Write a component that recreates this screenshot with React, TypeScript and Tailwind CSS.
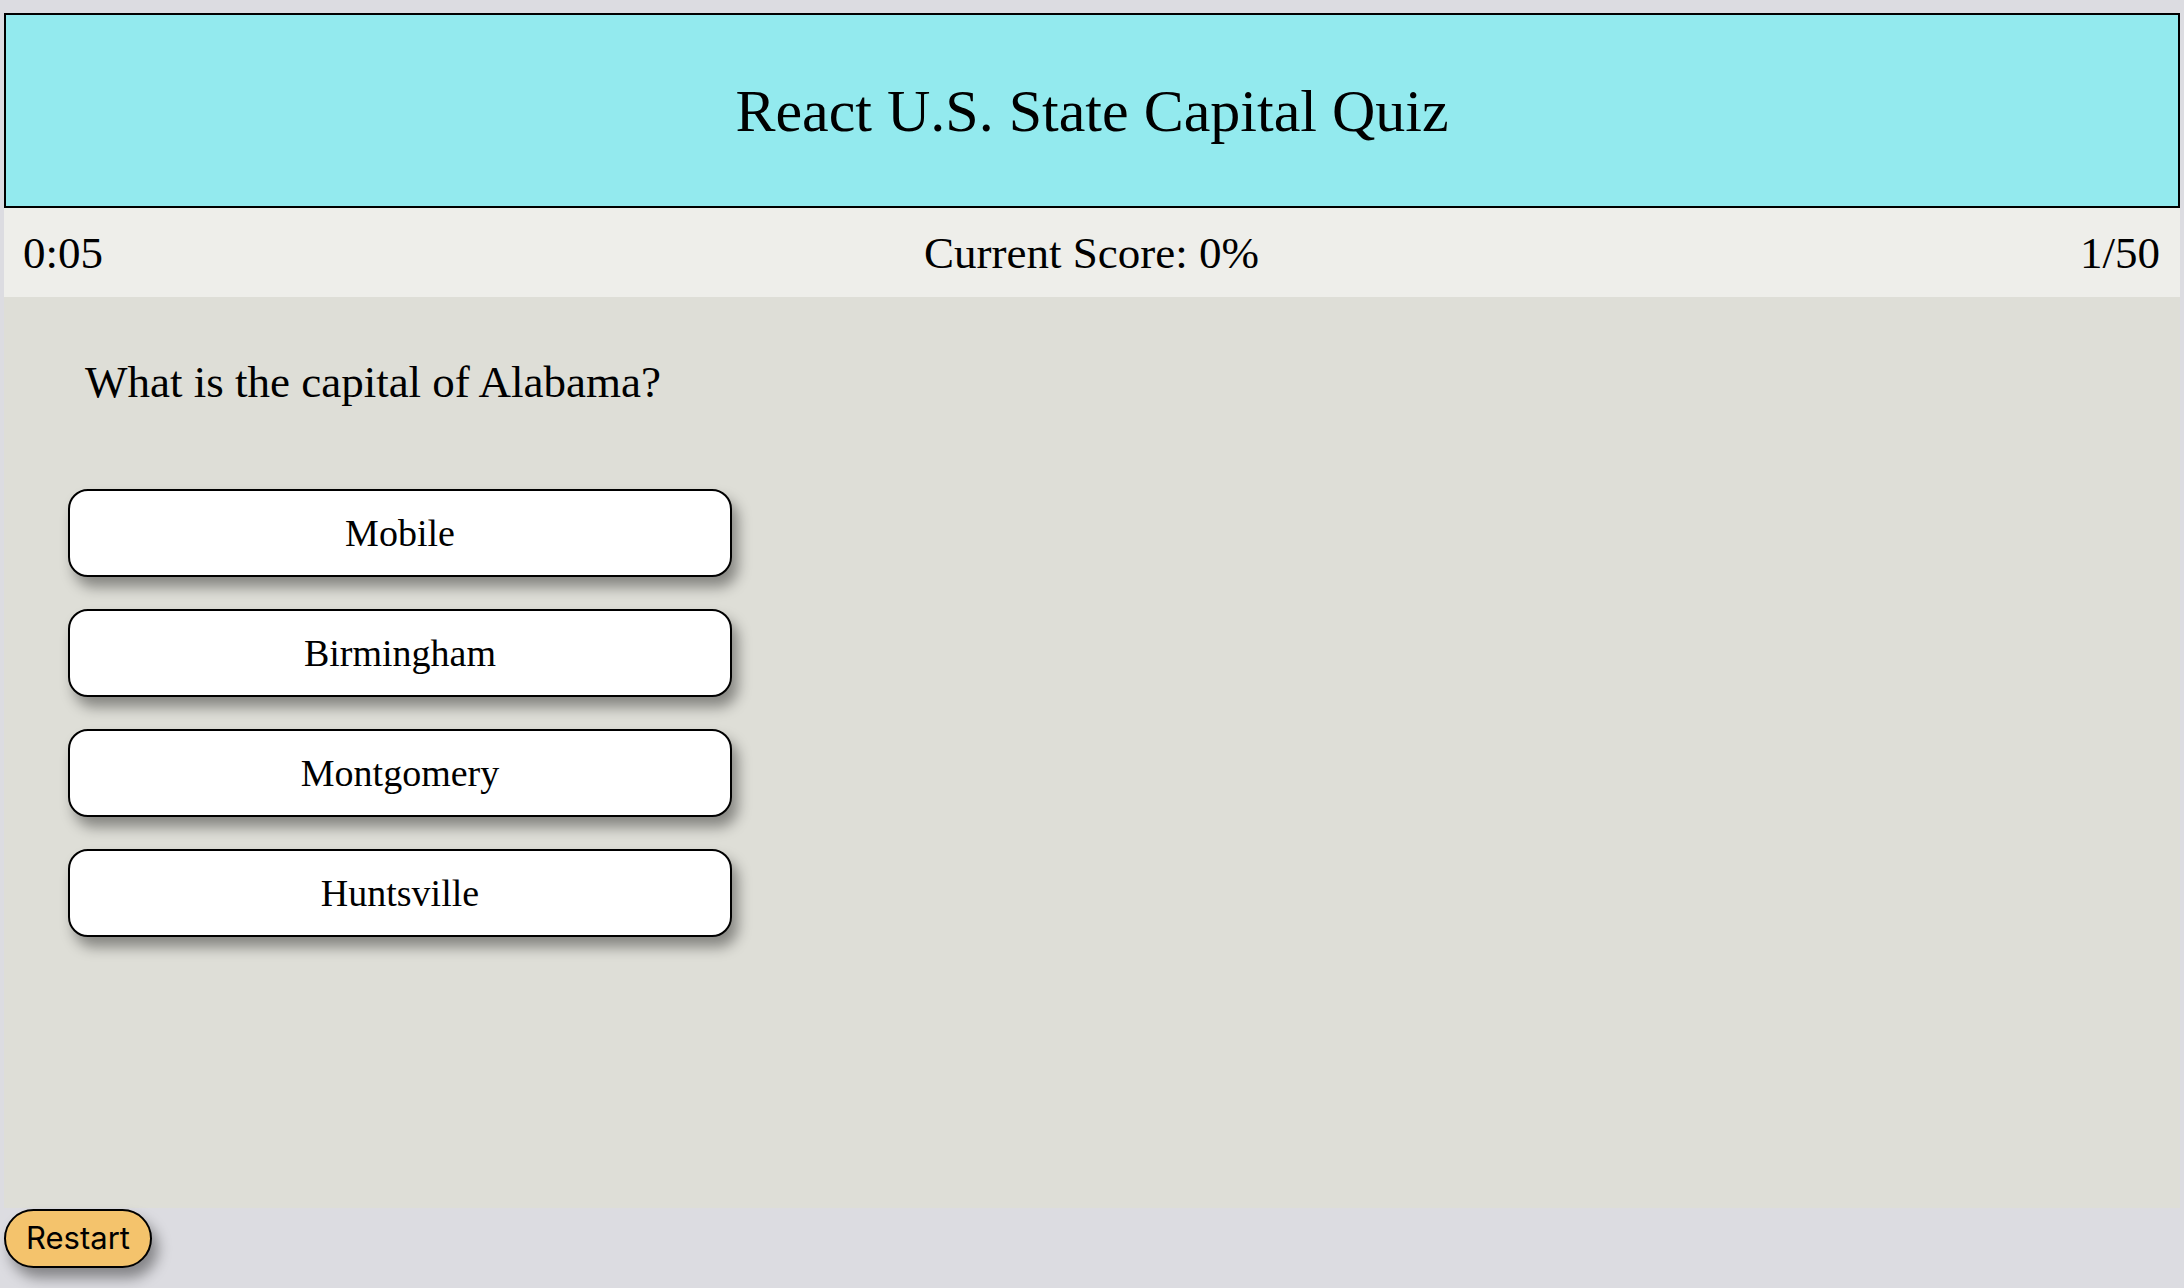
import React from "react";

const answers = ["Mobile", "Birmingham", "Montgomery", "Huntsville"];

const serif = "font-['Liberation_Serif','Times_New_Roman',serif]";

export default function App() {
  return (
    <div className="min-h-screen bg-[#dcdce1] px-[4px] pt-[13px]">
      {/* Header */}
      <header className="flex h-[195px] items-center justify-center border-2 border-black bg-[#93eaee]">
        <h1 className={`${serif} text-[60px] leading-none text-black`}>React U.S. State Capital Quiz</h1>
      </header>

      {/* Status bar */}
      <div className={`${serif} flex h-[89px] items-center justify-between bg-[#eeeeea] pl-[19px] pr-[20px] pt-[2px] text-[45px] leading-none text-black`}>
        <span>0:05</span>
        <span>Current Score: 0%</span>
        <span>1/50</span>
      </div>

      {/* Question */}
      <main className={`${serif} h-[911px] bg-[#deded7] pt-[59px] text-black`}>
        <p className="pl-[81px] text-[45px] leading-[52px]">What is the capital of Alabama?</p>
        <div className="mt-[81px] flex flex-col gap-[32px] pl-[64px]">
          {answers.map((a) => (
            <button
              key={a}
              className="flex h-[88px] w-[664px] items-center justify-center rounded-[20px] border-2 border-black bg-white text-[38px] text-black shadow-[6px_10px_14px_rgba(0,0,0,0.4)]"
            >
              {a}
            </button>
          ))}
        </div>
      </main>

      {/* Footer */}
      <div className="pt-[1px]">
        <button className="flex h-[59px] w-[148px] items-center justify-center rounded-full border-2 border-black bg-[#f4c36c] font-['Inter','Liberation_Sans',sans-serif] text-[31px] text-black shadow-[6px_10px_14px_rgba(0,0,0,0.4)]">
          Restart
        </button>
      </div>
    </div>
  );
}
